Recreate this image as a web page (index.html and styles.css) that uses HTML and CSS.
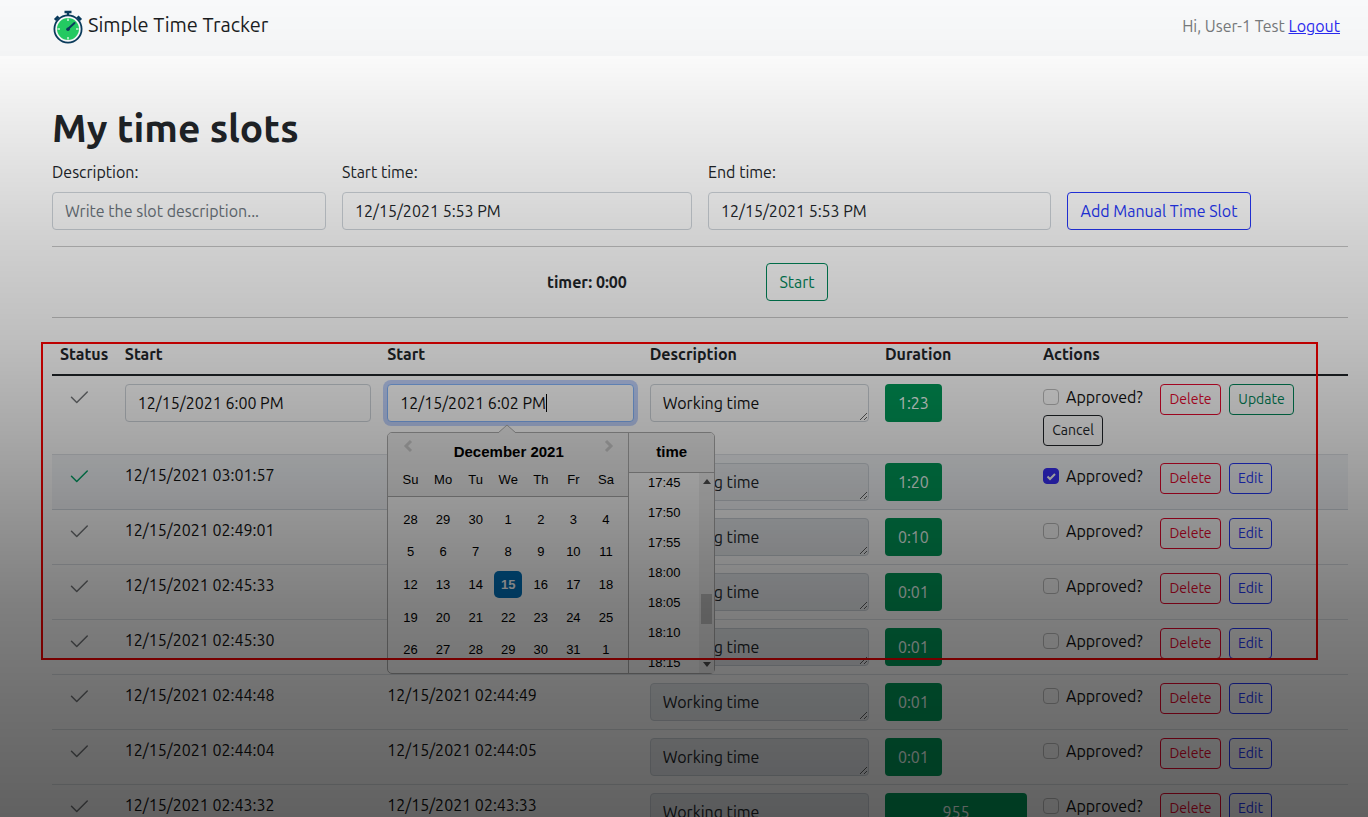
FILE: index.html
```html
<!DOCTYPE html>
<html lang="en">
<head>
<meta charset="utf-8">
<title>Simple Time Tracker</title>
<link rel="stylesheet" href="styles.css">
</head>
<body>
<header class="navbar">
  <a class="brand" href="#">
    <svg class="logo" viewBox="0 0 32 34" width="32" height="34" aria-hidden="true">
      <path d="M12.500 2h7M16 2v4" stroke="#0b3c5d" stroke-width="2.400" fill="none"/>
      <path d="M3 10l3.500-3.500M29 10l-3.500-3.500" stroke="#0b3c5d" stroke-width="3" fill="none"/>
      <circle cx="16" cy="19" r="13.600" fill="#f8f9fa" stroke="#0b3c5d" stroke-width="1.800"/>
      <circle cx="16" cy="19" r="11" fill="#24cc63"/>
      <path d="M16 8.500v2.500M16 27v2.500M5.500 19h2.500M24 19h2.500" stroke="#c9f2d8" stroke-width="1.600"/>
      <path d="M16 19l6.500-6" stroke="#0b3c5d" stroke-width="2" stroke-linecap="round"/>
      <circle cx="16" cy="19.200" r="1.800" fill="#0b3c5d"/>
    </svg>
    <span>Simple Time Tracker</span>
  </a>
  <p class="greeting">Hi, User-1 Test <a href="#">Logout</a></p>
</header>

<main class="page">
  <h1>My time slots</h1>
  <form class="slot-form">
    <div class="field"><label for="desc">Description:</label><input class="control" id="desc" type="text" placeholder="Write the slot description..."></div>
    <div class="field"><label for="start">Start time:</label><input class="control" id="start" type="text" value="12/15/2021 5:53 PM"></div>
    <div class="field"><label for="end">End time:</label><input class="control" id="end" type="text" value="12/15/2021 5:53 PM"></div>
    <button class="btn primary" type="button">Add Manual Time Slot</button>
  </form>
  <hr>
  <div class="timer"><strong>timer: 0:00</strong><button class="btn success" type="button">Start</button></div>
  <hr>

  <div class="slots">
    <table>
      <colgroup><col class="c-status"><col class="c-start"><col class="c-end"><col class="c-desc"><col class="c-dur"><col class="c-act"></colgroup>
      <thead><tr><th>Status</th><th>Start</th><th>Start</th><th>Description</th><th>Duration</th><th>Actions</th></tr></thead>
      <tbody id="rows"></tbody>
    </table>
    <div class="highlight"></div>
  </div>
</main>
<div class="shade"></div>

<template id="picker">
  <div class="picker">
    <svg class="tip" viewBox="0 0 18 9" width="18" height="9"><path d="M0 9L9 1L18 9" fill="#f0f0f0" stroke="#aeaeae"/></svg>
    <div class="calendar">
      <div class="cal-head">
        <div class="month">
          <button type="button" aria-label="Previous month"><svg viewBox="0 0 10 14" width="10" height="14"><path d="M8 2L3 7l5 5" fill="none" stroke="#ccc" stroke-width="3"/></svg></button>
          <span>December 2021</span>
          <button type="button" aria-label="Next month"><svg viewBox="0 0 10 14" width="10" height="14"><path d="M2 2l5 5l-5 5" fill="none" stroke="#ccc" stroke-width="3"/></svg></button>
        </div>
        <div class="week"></div>
      </div>
      <div class="days"></div>
    </div>
    <div class="times">
      <div class="times-title">time</div>
      <div class="times-body">
        <ul></ul>
        <div class="bar">
          <svg viewBox="0 0 8 5" width="8" height="5"><path d="M0 5L4 0l4 5z" fill="#505050"/></svg>
          <div class="thumb"></div>
          <svg viewBox="0 0 8 5" width="8" height="5"><path d="M0 0h8L4 5z" fill="#505050"/></svg>
        </div>
      </div>
    </div>
  </div>
</template>
<script src="app.js"></script>
</body>
</html>
```
FILE: styles.css
```css
* { box-sizing: border-box; }
body {
  margin: 0;
  height: 100vh;
  overflow: hidden;
  font: 16px/24px Ubuntu, "Open Sans", "Noto Sans", sans-serif;
  color: #212529;
  background: #fff;
}
input, button, textarea { font: inherit; color: inherit; margin: 0; }
.navbar {
  display: flex;
  align-items: center;
  justify-content: space-between;
  height: 56px;
  padding: 0 28px 2px 52px;
  background: #f8f9fa;
}
.brand {
  display: flex;
  align-items: center;
  gap: 4px;
  font-size: 20px;
  color: #1b1d1f;
  text-decoration: none;
}
.brand span { padding-bottom: 4px; }
.greeting { margin: 0; padding-bottom: 2px; color: #777a7c; }
.greeting a { color: #2a2af0; }
.page { padding: 48px 20px 0 52px; }
h1 { margin: 0 0 8px; font-size: 39px; line-height: 48px; font-weight: 600; }
.slot-form {
  display: grid;
  grid-template-columns: 274fr 350fr 343fr 184px;
  gap: 16px;
  align-items: end;
  padding-right: 97px;
}
.field { display: flex; flex-direction: column; gap: 8px; }
.control {
  display: block;
  width: 100%;
  height: 38px;
  padding: 6px 12px;
  border: 1px solid #ced4da;
  border-radius: 4px;
  background: #fff;
}
.slot-form .control { background: transparent; }
.control::placeholder { color: #6c757d; opacity: 1; }
.control:disabled { background: #e9ecef; color: #212529; }
textarea.control { resize: vertical; overflow: hidden; }
.control.focused { border-color: #86b7fe; box-shadow: 0 0 0 4px #c2d4fe; outline: 0; caret-color: transparent; }
.caret { position: absolute; top: 10px; left: 159px; width: 1px; height: 18px; background: #000; }
.btn {
  height: 38px;
  padding: 0 12px;
  border: 1px solid;
  border-radius: 4px;
  background: transparent;
  white-space: nowrap;
}
.btn.primary { color: #2637f8; padding: 0; }
.btn.success { color: #00875a; }
.btn.danger { color: #e8082f; }
.btn.dark { color: #212529; }
.btn.small { height: 31px; padding: 0; font-size: 14px; line-height: 21px; }
.w-delete { width: 61px; }
.w-update { width: 65px; }
.w-edit { width: 43px; }
.w-cancel { width: 60px; }
hr { margin: 16px 0; border: 0; border-top: 1px solid #c8c8c8; }
.timer { display: grid; grid-template-columns: 495fr 219fr 582fr; align-items: center; }
.timer strong { grid-column: 2; }
.timer .btn { justify-self: start; width: 62px; padding: 0; }

.slots { position: relative; }
table { width: 100%; border-collapse: separate; border-spacing: 0; table-layout: fixed; }
.c-status { width: 5%; }
.c-start { width: 20.25%; }
.c-end { width: 20.25%; }
.c-desc { width: 18.15%; }
.c-dur { width: 12.2%; }
th { padding: 8px; text-align: left; border-bottom: 2px solid #212529; }
td { padding: 8px; vertical-align: top; border-bottom: 1px solid #dee2e6; color: #111; }
.hovered td { background: #f3f5f8; border-color: #d3d9e0; }
.status { display: block; margin: 2px 0 0 7px; color: #74777a; }
.status.done { color: #00a468; }
.duration {
  display: inline-block;
  min-width: 57px;
  height: 38px;
  padding: 0;
  border: 0;
  border-radius: 4px;
  background: #009959;
  color: #f4fff9;
}
.duration.full { width: 100%; }
.actions { display: flex; flex-wrap: wrap; column-gap: 8px; }
.approve { display: flex; gap: 7px; width: 109px; padding-top: 1px; white-space: nowrap; line-height: 24px; }
.approve input {
  appearance: none;
  flex: none;
  width: 16px;
  height: 16px;
  margin-top: 4px;
  border: 1px solid #bfbfbf;
  border-radius: 4px;
  background: #fff;
}
.tick { position: relative; height: 24px; display: flex; }
.tick svg { position: absolute; left: 0; top: 4px; display: none; }
.tick input:checked { background: #3a30f8; border-color: #3a30f8; }
.tick input:checked + svg { display: block; }
.highlight { position: absolute; top: 8px; left: -11px; right: 30px; height: 318px; border: 2px solid #ff0000; z-index: 3; pointer-events: none; }

.date-cell { position: relative; }
.picker {
  position: absolute;
  top: 48px;
  left: 0;
  z-index: 2;
  display: flex;
  width: 328px;
  height: 242px;
  border: 1px solid #aeaeae;
  border-radius: 5px;
  background: #fff;
  color: #000;
  font: 13px/24px "Liberation Sans", Arial, sans-serif;
}
.tip { position: absolute; top: -9px; left: 110px; }
.calendar { flex: 1; }
.cal-head { height: 64px; padding: 0 6px; background: #f0f0f0; border-bottom: 1px solid #aeaeae; border-radius: 4px 0 0 0; }
.month { display: flex; justify-content: space-between; height: 35px; padding: 7px 8px 0 9px; font-size: 15px; font-weight: 700; }
.month button { align-self: start; display: flex; margin-top: -1px; padding: 0; border: 0; background: none; }
.week, .days { display: grid; grid-template-columns: repeat(7, 1fr); text-align: center; }
.days { height: 163px; margin: 6px 6px 0; place-items: center; }
.days span { width: 28px; line-height: 27px; }
.days .selected { border-radius: 5px; background: #0070b8; color: #fff; font-weight: 700; }
.times { width: 86px; border-left: 1px solid #aeaeae; }
.times-title { height: 40px; background: #f0f0f0; border-bottom: 1px solid #aeaeae; border-radius: 0 4px 0 0; text-align: center; font-size: 15px; font-weight: 700; line-height: 38px; }
.times-body { display: flex; height: 200px; overflow: hidden; }
.times ul { flex: 1; margin: -5px 0 0; padding: 0; list-style: none; text-align: center; line-height: 30px; }
.bar { display: flex; flex-direction: column; align-items: center; width: 15px; padding: 6px 0; background: #f1f1f1; }
.thumb { width: 11px; height: 30px; margin: 110px 0 auto; background: #c1c1c1; }

.shade {
  position: fixed;
  inset: 0;
  z-index: 10;
  pointer-events: none;
  background: linear-gradient(rgba(0,0,0,0) 0%, rgba(0,0,0,.02) 7%, rgba(0,0,0,.07) 14%, rgba(0,0,0,.18) 29%, rgba(0,0,0,.26) 42%, rgba(0,0,0,.35) 54%, rgba(0,0,0,.42) 63%, rgba(0,0,0,.5) 74%, rgba(0,0,0,.56) 86%, rgba(0,0,0,.62) 100%);
}
```
FILE: app.js
```js
const check = done => `<svg class="status${done ? " done" : ""}" viewBox="0 0 16 16" width="24" height="24" fill="currentColor"><path d="M13.854 3.646a.5.5 0 0 1 0 .708l-7 7a.5.5 0 0 1-.708 0l-3.500-3.500a.5.5 0 1 1 .708-.708L6.500 10.293l6.646-6.647a.5.5 0 0 1 .708 0z"/></svg>`;
const slots = [
  { start: "12/15/2021 6:00 PM", end: "12/15/2021 6:02 PM", duration: "1:23", editing: true },
  { start: "12/15/2021 03:01:57", end: "", duration: "1:20", approved: true },
  { start: "12/15/2021 02:49:01", end: "", duration: "0:10" },
  { start: "12/15/2021 02:45:33", end: "", duration: "0:01" },
  { start: "12/15/2021 02:45:30", end: "", duration: "0:01" },
  { start: "12/15/2021 02:44:48", end: "12/15/2021 02:44:49", duration: "0:01" },
  { start: "12/15/2021 02:44:04", end: "12/15/2021 02:44:05", duration: "0:01" },
  { start: "12/15/2021 02:43:32", end: "12/15/2021 02:43:33", duration: "955", full: true }
];
const button = (kind, text) => `<button type="button" class="btn small ${kind} w-${text.toLowerCase()}">${text}</button>`;
document.getElementById("rows").innerHTML = slots.map((s, i) => `
  <tr class="${s.approved ? "hovered" : ""}">
    <td>${check(s.approved)}</td>
    <td>${s.editing ? `<input class="control" type="text" aria-label="Start" value="${s.start}">` : s.start}</td>
    <td>${s.editing ? `<div class="date-cell" id="date-cell"><input class="control focused" type="text" aria-label="End" value="${s.end}"><span class="caret"></span></div>` : s.end}</td>
    <td><textarea class="control" rows="1" aria-label="Description" ${s.editing ? "" : "disabled"}>Working time</textarea></td>
    <td><button type="button" class="duration${s.full ? " full" : ""}">${s.duration}</button></td>
    <td><div class="actions">
      <label class="approve" for="ok${i}"><span class="tick"><input type="checkbox" id="ok${i}" ${s.approved ? "checked" : ""}><svg viewBox="0 0 16 16" width="16" height="16"><path d="M4.500 8.500l2.500 2.500l5-5" fill="none" stroke="#fff" stroke-width="2"/></svg></span>Approved?</label>
      ${button("danger", "Delete")}${s.editing ? button("success", "Update") + button("dark", "Cancel") : button("primary", "Edit")}
    </div></td>
  </tr>`).join("");

document.getElementById("date-cell").append(document.getElementById("picker").content.cloneNode(true));
const fill = (selector, tag, items) => {
  document.querySelector(selector).innerHTML = items.map(x => `<${tag}>${x}</${tag}>`).join("");
};
fill(".week", "span", ["Su", "Mo", "Tu", "We", "Th", "Fr", "Sa"]);
fill(".days", "span", [28, 29, 30, ...Array.from({ length: 31 }, (_, i) => i + 1), 1]);
document.querySelectorAll(".days span")[17].className = "selected";
fill(".times ul", "li", ["17:45", "17:50", "17:55", "18:00", "18:05", "18:10", "18:15"]);
```
